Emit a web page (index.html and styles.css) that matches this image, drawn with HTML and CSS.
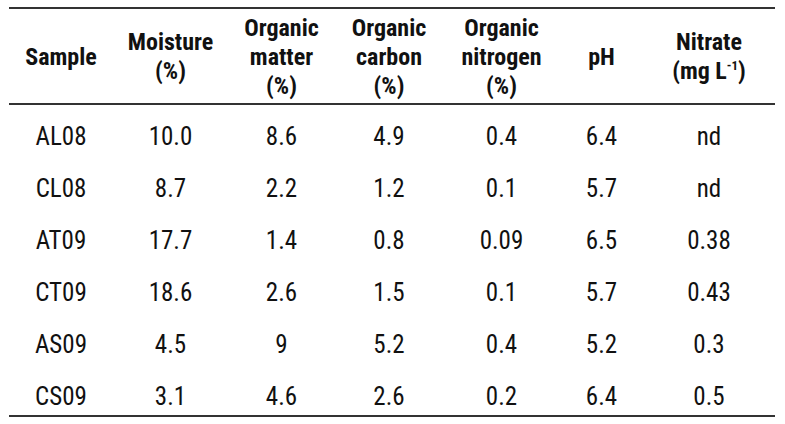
FILE: index.html
```html
<!DOCTYPE html>
<html lang="en">
<head>
<meta charset="utf-8">
<title>Soil samples</title>
<link rel="stylesheet" href="styles.css">
</head>
<body>
<table class="data">
  <colgroup>
    <col class="c1"><col class="c2"><col class="c3"><col class="c4"><col class="c5"><col class="c6"><col class="c7">
  </colgroup>
  <thead>
    <tr>
      <th>Sample</th>
      <th>Moisture<br>(%)</th>
      <th>Organic<br>matter<br>(%)</th>
      <th>Organic<br>carbon<br>(%)</th>
      <th>Organic<br>nitrogen<br>(%)</th>
      <th>pH</th>
      <th>Nitrate<br>(mg L<sup>-1</sup>)</th>
    </tr>
  </thead>
  <tbody>
    <tr><td>AL08</td><td>10.0</td><td>8.6</td><td>4.9</td><td>0.4</td><td>6.4</td><td>nd</td></tr>
    <tr><td>CL08</td><td>8.7</td><td>2.2</td><td>1.2</td><td>0.1</td><td>5.7</td><td>nd</td></tr>
    <tr><td>AT09</td><td>17.7</td><td>1.4</td><td>0.8</td><td>0.09</td><td>6.5</td><td>0.38</td></tr>
    <tr><td>CT09</td><td>18.6</td><td>2.6</td><td>1.5</td><td>0.1</td><td>5.7</td><td>0.43</td></tr>
    <tr><td>AS09</td><td>4.5</td><td>9</td><td>5.2</td><td>0.4</td><td>5.2</td><td>0.3</td></tr>
    <tr class="last"><td>CS09</td><td>3.1</td><td>4.6</td><td>2.6</td><td>0.2</td><td>6.4</td><td>0.5</td></tr>
  </tbody>
</table>
</body>
</html>
```
FILE: styles.css
```css
html, body {
  margin: 0;
  padding: 0;
  background: #ffffff;
}

body {
  font-family: "Liberation Sans Narrow", "Arial Narrow", "Roboto Condensed", "DejaVu Sans Condensed", "Liberation Sans", sans-serif;
  font-stretch: condensed;
  color: #111111;
}

.data {
  margin: 7px 0 0 9px;
  width: 766px;
  table-layout: fixed;
  border-collapse: collapse;
  border-top: 2px solid #333333;
  border-bottom: 2px solid #333333;
}

.c1 { width: 104px; }
.c2 { width: 115px; }
.c3 { width: 107px; }
.c4 { width: 108px; }
.c5 { width: 117px; }
.c6 { width: 83px; }
.c7 { width: 132px; }

.data thead tr {
  border-bottom: 2px solid #333333;
}

.data th {
  font-weight: bold;
  font-size: 24px;
  line-height: 29px;
  height: 92px;
  padding: 2px 0 0;
  text-align: center;
  vertical-align: middle;
}

.data th sup {
  font-size: 13px;
  line-height: 0;
  vertical-align: 9px;
}

.data td {
  font-size: 25px;
  line-height: 26px;
  padding: 19px 0 7px;
  text-align: center;
  font-weight: normal;
}

.data tr.last td {
  padding-bottom: 5px;
}
```
